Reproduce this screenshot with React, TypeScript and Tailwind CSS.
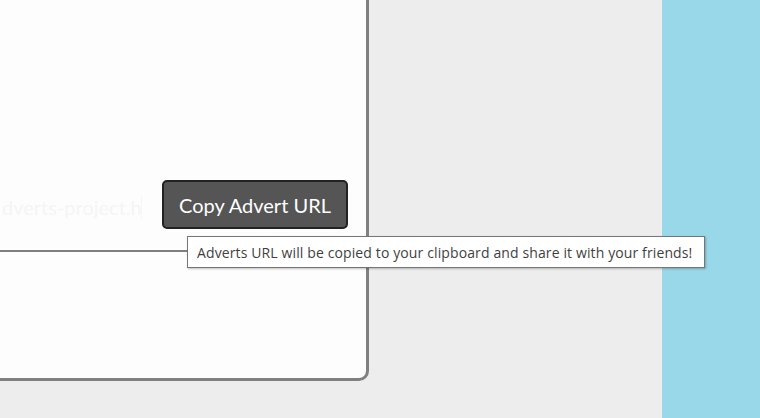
export default function App() {
  return (
    <div className="relative flex h-[418px] w-[760px] overflow-hidden bg-[#ededed] font-['Lato',sans-serif]">
      <div className="flex h-[381px] w-[369px] shrink-0 flex-col rounded-br-[10px] border-r-[3px] border-b-[3px] border-[#808080] bg-[#fdfdfd]">
        <div className="flex h-[252px] shrink-0 items-start border-b-[2px] border-[#808080] pt-[180px]">
          <div className="mt-[15px] h-[24px] w-[142px] overflow-hidden border-r border-[#f6f6f6] pl-[2px] text-[20px] leading-[24px] whitespace-nowrap text-[#f5f5f5]">
            dverts-project.h
          </div>
          <button
            type="button"
            className="ml-[20px] h-[49px] w-[186px] rounded-[5px] border-2 border-[#222222] bg-[#555555] text-[20px] text-white"
          >
            Copy Advert URL
          </button>
        </div>
      </div>
      <div className="flex-1" />
      <div className="h-full w-[98px] shrink-0 bg-[#99d8e9]" />

      <div className="absolute top-[236px] left-[187px] flex h-[32px] w-[518px] items-center border border-[#767676] bg-white pl-[9px] font-['Open_Sans',sans-serif] text-[14px] tracking-[0.12px] whitespace-nowrap text-[#3f3f3f] shadow-[1px_1px_2px_rgba(0,0,0,0.25)]">
        Adverts URL will be copied to your clipboard and share it with your friends!
      </div>
    </div>
  );
}
